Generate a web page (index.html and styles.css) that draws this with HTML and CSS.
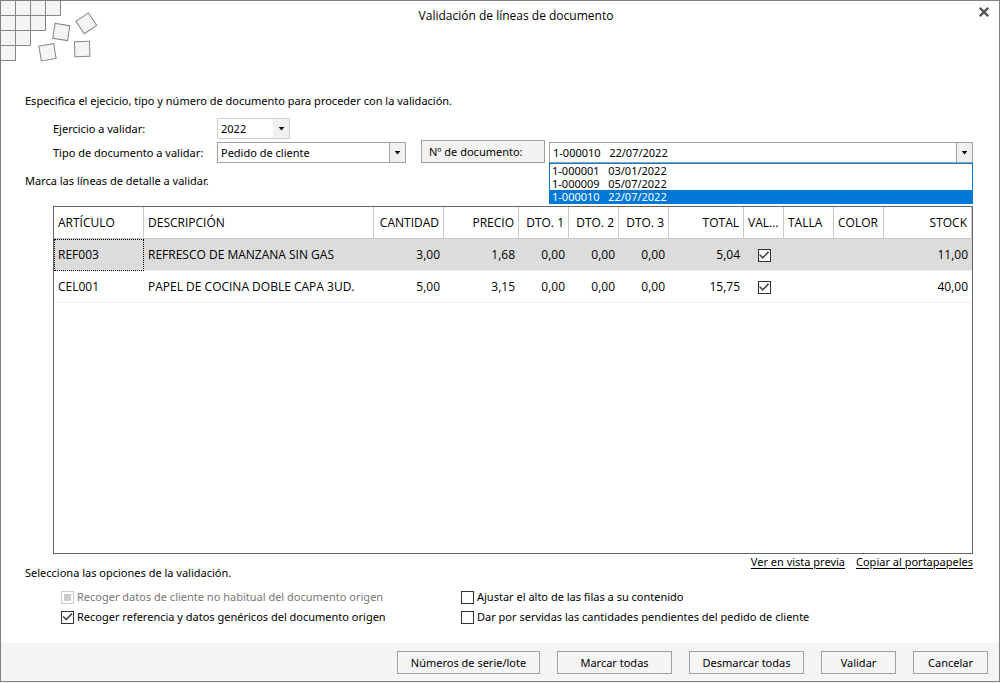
FILE: index.html
```html
<!DOCTYPE html>
<html lang="es">
<head>
<meta charset="utf-8">
<meta name="viewport" content="width=device-width, initial-scale=1">
<title>Validación de líneas de documento</title>
<link rel="stylesheet" href="styles.css">
</head>
<body>
<main class="dialog">
  <header class="titlebar">
    <svg class="logo" width="96" height="64" viewBox="1 1 96 64" fill="#f4f4f4" stroke="#858585" aria-hidden="true">
      <path d="M.5.5h60v15h-15v15h-15v15h-15v15h-15z" />
      <path fill="none" d="M15.500.5v45M30.500.5v30M45.500.5v15M.5 15.500h45M.5 30.500h30M.5 45.500h15" />
      <rect x="-7.500" y="-7.500" width="15" height="15" transform="translate(61.300 32) rotate(9)" />
      <rect x="-7.500" y="-7.500" width="15" height="15" transform="translate(86.300 23.300) rotate(-34)" />
      <rect x="-7.500" y="-7.500" width="15" height="15" transform="translate(47.500 52.300) rotate(-10)" />
      <rect x="-7.500" y="-7.500" width="15" height="15" transform="translate(82.200 49) rotate(-2)" />
    </svg>
    <h1 class="title">Validación de líneas de documento</h1>
    <button class="close" type="button" aria-label="Cerrar">
      <svg width="10" height="10" viewBox="0 0 10 10" stroke="#555" stroke-width="2.400" aria-hidden="true"><path d="M.8.8l8.400 8.400M9.200.8L.8 9.200" /></svg>
    </button>
  </header>

  <form class="content">
    <p class="lead">Especifica el ejecicio, tipo y número de documento para proceder con la validación.</p>

    <div class="fields">
      <div class="row">
        <label class="field-label" for="year">Ejercicio a validar:</label>
        <span class="combo combo-year">
          <select id="year"><option>2022</option></select>
          <svg class="arrow" width="16" height="19" viewBox="0 0 16 19" aria-hidden="true"><path d="M5 8h6l-3 3.500z" /></svg>
        </span>
      </div>
      <div class="row">
        <label class="field-label" for="type">Tipo de documento a validar:</label>
        <span class="combo combo-type">
          <select id="type"><option>Pedido de cliente</option></select>
          <svg class="arrow" width="16" height="19" viewBox="0 0 16 19" aria-hidden="true"><path d="M5 8h6l-3 3.500z" /></svg>
        </span>
        <button class="doc-button" type="button">Nº de documento:</button>
        <span class="combo combo-doc">
          <select id="doc" aria-label="Nº de documento">
            <option>1-000001&nbsp;&nbsp; 03/01/2022</option>
            <option>1-000009&nbsp;&nbsp; 05/07/2022</option>
            <option selected>1-000010&nbsp;&nbsp; 22/07/2022</option>
          </select>
          <svg class="arrow" width="16" height="19" viewBox="0 0 16 19" aria-hidden="true"><path d="M5 8h6l-3 3.500z" /></svg>
          <ul class="menu" role="listbox" aria-label="Documentos">
            <li role="option">1-000001&nbsp;&nbsp; 03/01/2022</li>
            <li role="option">1-000009&nbsp;&nbsp; 05/07/2022</li>
            <li role="option" class="active" aria-selected="true">1-000010&nbsp;&nbsp; 22/07/2022</li>
          </ul>
        </span>
      </div>
    </div>

    <p class="lead lead-lines">Marca las líneas de detalle a validar.</p>

    <div class="grid-box">
      <table class="lines">
        <colgroup>
          <col class="w-article"><col class="w-desc"><col class="w-qty"><col class="w-amount"><col class="w-small"><col class="w-small"><col class="w-small"><col class="w-amount"><col class="w-check"><col class="w-small"><col class="w-small"><col>
        </colgroup>
        <thead>
          <tr>
            <th>ARTÍCULO</th><th>DESCRIPCIÓN</th><th class="num">CANTIDAD</th><th class="num">PRECIO</th><th class="num">DTO. 1</th><th class="num">DTO. 2</th><th class="num">DTO. 3</th><th class="num">TOTAL</th><th>VAL...</th><th>TALLA</th><th>COLOR</th><th class="num">STOCK</th>
          </tr>
        </thead>
        <tbody>
          <tr class="current">
            <td class="focused">REF003</td><td>REFRESCO DE MANZANA SIN GAS</td><td class="num">3,00</td><td class="num">1,68</td><td class="num">0,00</td><td class="num">0,00</td><td class="num">0,00</td><td class="num">5,04</td><td class="mark"><input class="check" type="checkbox" checked aria-label="Validar REF003"></td><td></td><td></td><td class="num">11,00</td>
          </tr>
          <tr>
            <td>CEL001</td><td>PAPEL DE COCINA DOBLE CAPA 3UD.</td><td class="num">5,00</td><td class="num">3,15</td><td class="num">0,00</td><td class="num">0,00</td><td class="num">0,00</td><td class="num">15,75</td><td class="mark"><input class="check" type="checkbox" checked aria-label="Validar CEL001"></td><td></td><td></td><td class="num">40,00</td>
          </tr>
        </tbody>
      </table>
    </div>

    <div class="below">
      <p class="lead lead-options">Selecciona las opciones de la validación.</p>
      <nav class="links">
        <a href="#preview">Ver en vista previa</a>
        <a href="#copy">Copiar al portapapeles</a>
      </nav>
    </div>

    <div class="options">
      <label class="option disabled"><input class="check" type="checkbox" disabled>Recoger datos de cliente no habitual del documento origen</label>
      <label class="option"><input class="check" type="checkbox">Ajustar el alto de las filas a su contenido</label>
      <label class="option"><input class="check" type="checkbox" checked>Recoger referencia y datos genéricos del documento origen</label>
      <label class="option"><input class="check" type="checkbox">Dar por servidas las cantidades pendientes del pedido de cliente</label>
    </div>
  </form>

  <footer class="actions">
    <button class="btn btn-serial" type="button">Números de serie/lote</button>
    <button class="btn btn-mid" type="button">Marcar todas</button>
    <button class="btn btn-mid" type="button">Desmarcar todas</button>
    <button class="btn" type="button">Validar</button>
    <button class="btn" type="button">Cancelar</button>
  </footer>
</main>
</body>
</html>
```
FILE: styles.css
```css
* { box-sizing: border-box; }

body {
  margin: 0;
  background: #f0f0f0;
  color: #000;
  font: 11px/16px "Noto Sans", "Open Sans", sans-serif;
}

button, select, input { font: inherit; color: inherit; margin: 0; }
h1, p, ul { margin: 0; padding: 0; }

.dialog {
  display: flex;
  flex-direction: column;
  min-height: calc(100vh - 1px);
  border: 1px solid #808080;
  background: #fff;
}

/* Title bar */
.titlebar {
  display: grid;
  grid-template-columns: 96px 1fr 64px;
  align-items: start;
  height: 64px;
}
.logo { display: block; }
.title {
  padding-top: 7px;
  font-family: "Open Sans", "Noto Sans", sans-serif;
  font-size: 12px;
  font-weight: 400;
  text-align: center;
}
.close {
  justify-self: end;
  display: flex;
  padding: 6px 10px;
  border: 0;
  background: none;
}

/* Content */
.content {
  flex: 1;
  display: flex;
  flex-direction: column;
  padding: 28px 26px 16px 24px;
}
.fields {
  display: grid;
  gap: 1px;
  padding: 9px 0 10px 28px;
}
.row { display: flex; align-items: flex-end; }
.field-label { width: 164px; line-height: 20px; }

.combo {
  position: relative;
  display: flex;
  height: 21px;
  border: 1px solid #a0a0a0;
}
.combo select {
  flex: 1;
  min-width: 0;
  padding: 0 20px 0 3px;
  border: 0;
  background: #fff;
  appearance: none;
}
.arrow {
  position: absolute;
  top: 0;
  right: 0;
  border-left: 1px solid #a0a0a0;
  background: #f0f0f0;
  pointer-events: none;
}
.combo-year { width: 73px; border-color: #d0d0d0; }
.combo-year .arrow { border-left-color: #f0f0f0; }
.combo-type { width: 189px; margin-right: 15px; }
.combo-doc { flex: 1; }

.doc-button {
  width: 124px;
  height: 23px;
  margin-right: 4px;
  padding: 0 7px;
  border: 1px solid #a0a0a0;
  background: #f2f2f2;
  text-align: left;
}

.menu {
  position: absolute;
  z-index: 1;
  top: 20px;
  left: -1px;
  right: -1px;
  border: 1px solid #0078d7;
  background: #fff;
  line-height: 13px;
  list-style: none;
}
.menu li { padding: 0 2px; }
.menu .active { background: #0078d7; color: #fff; }

/* Document lines */
.grid-box {
  flex: 1;
  margin: 17px 0 0 28px;
  border: 1px solid #646464;
}
.lines {
  width: 100%;
  border-collapse: separate;
  border-spacing: 0;
  table-layout: fixed;
  font-family: "Open Sans", "Noto Sans", sans-serif;
  font-size: 12px;
}
.w-article { width: 90px; }
.w-desc { width: 230px; }
.w-qty { width: 70px; }
.w-amount { width: 75px; }
.w-small { width: 50px; }
.w-check { width: 40px; }

.lines th, .lines td {
  height: 32px;
  padding: 0 4px;
  text-align: left;
  font-weight: 400;
  white-space: nowrap;
}
.lines th {
  border-right: 1px solid #c8c8c8;
  border-bottom: 1px solid #c8c8c8;
}
.lines td { border-bottom: 1px solid #f0f0f0; }
.lines .num { text-align: right; }
.lines .mark { text-align: center; }
.lines .mark .check { display: inline-block; vertical-align: middle; }
.current td { background: #dcdcdc; }
.lines .focused { outline: 1px dotted #000; outline-offset: -1px; }

/* Check boxes */
.check {
  appearance: none;
  display: grid;
  place-items: center;
  flex: none;
  width: 13px;
  height: 13px;
  border: 1px solid #333;
  background: #fff;
}
.check:checked::before {
  content: "";
  display: block;
  width: 11px;
  height: 11px;
  background: #444;
  clip-path: polygon(5% 48%, 16% 40%, 38% 64%, 86% 14%, 96% 24%, 38% 84%);
}
.check:disabled { border-color: #ccc; }
.check:disabled::before {
  content: "";
  width: 7px;
  height: 7px;
  background: #ccc;
}

/* Below the grid */
.below { display: flex; justify-content: space-between; }
.lead-options { padding-top: 11px; }
.links { display: flex; gap: 11px; }
.links a { color: #000; text-underline-offset: 2px; }

.options {
  display: grid;
  grid-template-columns: 400px 1fr;
  grid-auto-rows: 20px;
  padding: 6px 0 0 36px;
}
.option { display: flex; align-items: center; gap: 3px; }
.disabled { color: #787878; }

/* Footer */
.actions {
  display: flex;
  justify-content: flex-end;
  gap: 17px;
  padding: 8px 11px 7px;
  background: #f4f4f4;
}
.btn {
  width: 75px;
  height: 23px;
  padding: 0;
  border: 1px solid #a0a0a0;
  background: #f4f4f4;
}
.btn-serial { width: 143px; }
.btn-mid { width: 115px; }
```
